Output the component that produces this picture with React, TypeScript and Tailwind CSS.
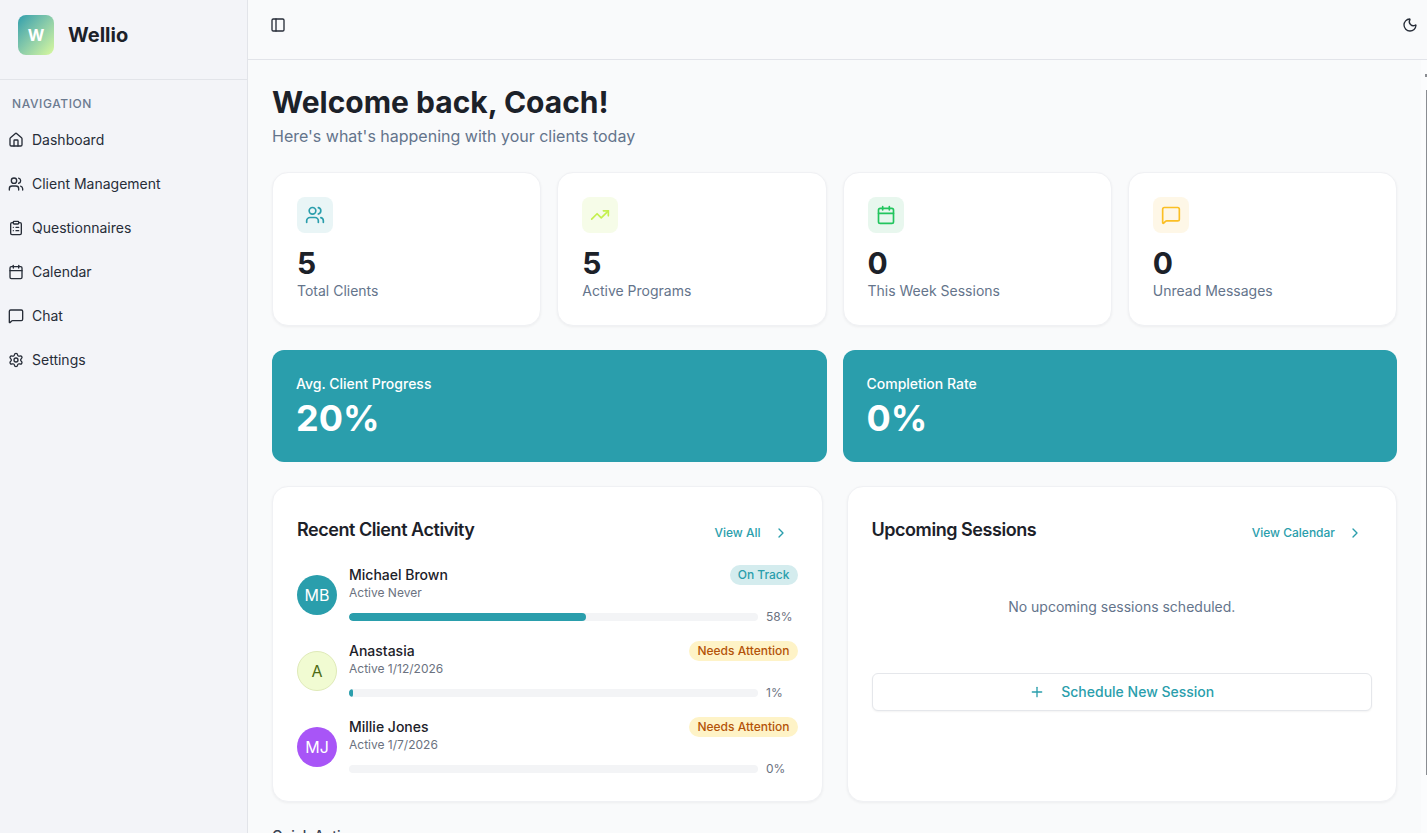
import { Calendar, ChevronRight, ClipboardList, House, MessageSquare, Moon, PanelLeft, Plus, Settings, TrendingUp, Users } from "lucide-react";

const nav = [
  { label: "Dashboard", icon: House },
  { label: "Client Management", icon: Users },
  { label: "Questionnaires", icon: ClipboardList },
  { label: "Calendar", icon: Calendar },
  { label: "Chat", icon: MessageSquare },
  { label: "Settings", icon: Settings },
];

const stats = [
  { value: "5", label: "Total Clients", icon: Users, box: "bg-[#e9f5f6]", color: "text-[#2a9eac]" },
  { value: "5", label: "Active Programs", icon: TrendingUp, box: "bg-[#f6fce8]", color: "text-[#c4f04d]" },
  { value: "0", label: "This Week Sessions", icon: Calendar, box: "bg-[#e8f7ee]", color: "text-[#22c55e]" },
  { value: "0", label: "Unread Messages", icon: MessageSquare, box: "bg-[#fef7e7]", color: "text-[#fbbf24]" },
];

const clients = [
  { initials: "MB", name: "Michael Brown", active: "Active Never", status: "On Track", progress: "58%", bar: "w-[58%]", avatar: "bg-[#2a9eac] text-white", badge: "bg-[#d4ecee] text-[#2a9eac]" },
  { initials: "A", name: "Anastasia", active: "Active 1/12/2026", status: "Needs Attention", progress: "1%", bar: "w-[1%]", avatar: "bg-[#f1fbd2] text-[#4d6b14] border border-[#dfeab8]", badge: "bg-[#fef3c7] text-[#b45309]" },
  { initials: "MJ", name: "Millie Jones", active: "Active 1/7/2026", status: "Needs Attention", progress: "0%", bar: "w-0", avatar: "bg-[#a855f7] text-white", badge: "bg-[#fef3c7] text-[#b45309]" },
];

function Card({ children, className }: { children: React.ReactNode; className: string }) {
  return <div className={`rounded-2xl border border-[#f0f1f4] bg-white shadow-[0_1px_3px_rgba(0,0,0,0.05)] ${className}`}>{children}</div>;
}

export default function App() {
  return (
    <div className="flex h-[833px] w-[1427px] overflow-hidden bg-[#f9fafb] font-['Inter',sans-serif] text-[#1c2129]">
      {/* Sidebar */}
      <aside className="w-[248px] shrink-0 border-r border-[#e2e4e9] bg-[#f3f4f8]">
        <div className="flex h-[80px] items-center gap-[14px] border-b border-[#e2e4e9] pb-[9px] pl-[18px]">
          <div className="flex h-10 w-9 items-center justify-center rounded-lg bg-gradient-to-br from-[#2a9eac] to-[#d9f99d] text-base font-bold text-white">W</div>
          <span className="text-xl font-bold">Wellio</span>
        </div>
        <div className="pt-4">
          <p className="mb-[6px] pl-3 text-xs font-medium leading-4 tracking-[0.05em] text-[#6b7a90]">NAVIGATION</p>
          <nav className="flex flex-col">
            {nav.map((item) => (
              <a key={item.label} className="flex h-11 items-center gap-2 pl-2 text-sm text-[#272d38]">
                <item.icon size={16} strokeWidth={2} />
                <span>{item.label}</span>
              </a>
            ))}
          </nav>
        </div>
      </aside>

      <div className="flex min-w-0 flex-1 flex-col">
        {/* Top bar */}
        <header className="flex h-[60px] shrink-0 items-center justify-between border-b border-[#e2e4e9] pr-[9px] pb-[10px] pl-[22px]">
          <PanelLeft size={16} className="text-[#272d38]" />
          <Moon size={16} className="text-[#272d38]" />
        </header>

        <main className="relative min-h-0 flex-1 overflow-hidden pt-[24px] pr-[30px] pl-[24px]">
          <h1 className="text-[30px] leading-9 font-bold">Welcome back, Coach!</h1>
          <p className="mt-[4px] text-base leading-6 text-[#64748b]">Here's what's happening with your clients today</p>

          <div className="mt-6 grid grid-cols-4 gap-4">
            {stats.map((s) => (
              <Card key={s.label} className="h-[154px] p-6">
                <div className={`flex h-9 w-9 items-center justify-center rounded-lg ${s.box}`}>
                  <s.icon size={20} className={s.color} />
                </div>
                <p className="mt-3 text-3xl leading-9 font-bold">{s.value}</p>
                <p className="text-sm leading-5 text-[#64748b]">{s.label}</p>
              </Card>
            ))}
          </div>

          <div className="mt-6 grid grid-cols-2 gap-4">
            {[{ label: "Avg. Client Progress", value: "20%" }, { label: "Completion Rate", value: "0%" }].map((m) => (
              <div key={m.label} className="h-[112px] rounded-xl bg-[#2a9eac] px-6 pt-6 text-white">
                <p className="text-sm leading-5 font-medium">{m.label}</p>
                <p className="mt-1 text-4xl leading-10 font-bold">{m.value}</p>
              </div>
            ))}
          </div>

          <div className="mt-6 grid grid-cols-2 gap-6">
            <Card className="h-[316px] p-6">
              <div className="flex h-10 items-start justify-between">
                <h2 className="mt-[5px] text-lg leading-7 font-semibold tracking-tight">Recent Client Activity</h2>
                <a className="mt-[4px] flex h-9 items-center gap-3 pr-[9px] pl-3 text-xs font-medium text-[#2a9eac]">
                  View All <ChevronRight size={16} />
                </a>
              </div>
              <div className="mt-[14px] flex flex-col gap-4">
                {clients.map((c) => (
                  <div key={c.name} className="flex h-[60px] items-center gap-3">
                    <div className={`flex h-10 w-10 shrink-0 items-center justify-center rounded-full text-base ${c.avatar}`}>{c.initials}</div>
                    <div className="min-w-0 flex-1">
                      <div className="flex items-start justify-between">
                        <div>
                          <p className="text-sm leading-5 font-medium">{c.name}</p>
                          <p className="text-xs leading-4 text-[#6b7280]">{c.active}</p>
                        </div>
                        <span className={`rounded-full px-2 py-[2px] text-xs leading-4 font-medium ${c.badge}`}>{c.status}</span>
                      </div>
                      <div className="mt-2 flex items-center gap-2">
                        <div className="h-2 w-[409px] overflow-hidden rounded-full bg-[#f3f4f6]">
                          <div className={`h-full rounded-full bg-[#2a9eac] ${c.bar}`}></div>
                        </div>
                        <span className="text-xs leading-4 text-[#6b7280]">{c.progress}</span>
                      </div>
                    </div>
                  </div>
                ))}
              </div>
            </Card>

            <Card className="h-[316px] p-6">
              <div className="flex h-10 items-start justify-between">
                <h2 className="mt-[5px] text-lg leading-7 font-semibold tracking-tight">Upcoming Sessions</h2>
                <a className="mt-[4px] flex h-9 items-center gap-3 pr-[9px] pl-3 text-xs font-medium text-[#2a9eac]">
                  View Calendar <ChevronRight size={16} />
                </a>
              </div>
              <p className="mt-[46px] text-center text-sm leading-5 text-[#64748b]">No upcoming sessions scheduled.</p>
              <button className="mt-[56px] flex h-[38px] w-full items-center justify-center gap-4 rounded-md border border-[#e5e7eb] bg-white text-sm font-medium text-[#2a9eac] shadow-[0_1px_2px_rgba(0,0,0,0.05)]">
                <Plus size={16} /> Schedule New Session
              </button>
            </Card>
          </div>

          <p className="mt-6 text-sm leading-5 font-medium text-[#374151]">Quick Actions</p>

          {/* Scrollbar, sits over the right edge of the scroll area */}
          <div className="absolute top-0 right-0 bottom-0 w-[6px] bg-[#fbfcfd]">
            <div className="absolute top-[14px] right-0 h-[3px] w-[2px] bg-[#8a8d92]"></div>
            <div className="absolute top-[30px] right-0 h-[685px] w-px bg-[#8a8d92]"></div>
          </div>
        </main>
      </div>
    </div>
  );
}
